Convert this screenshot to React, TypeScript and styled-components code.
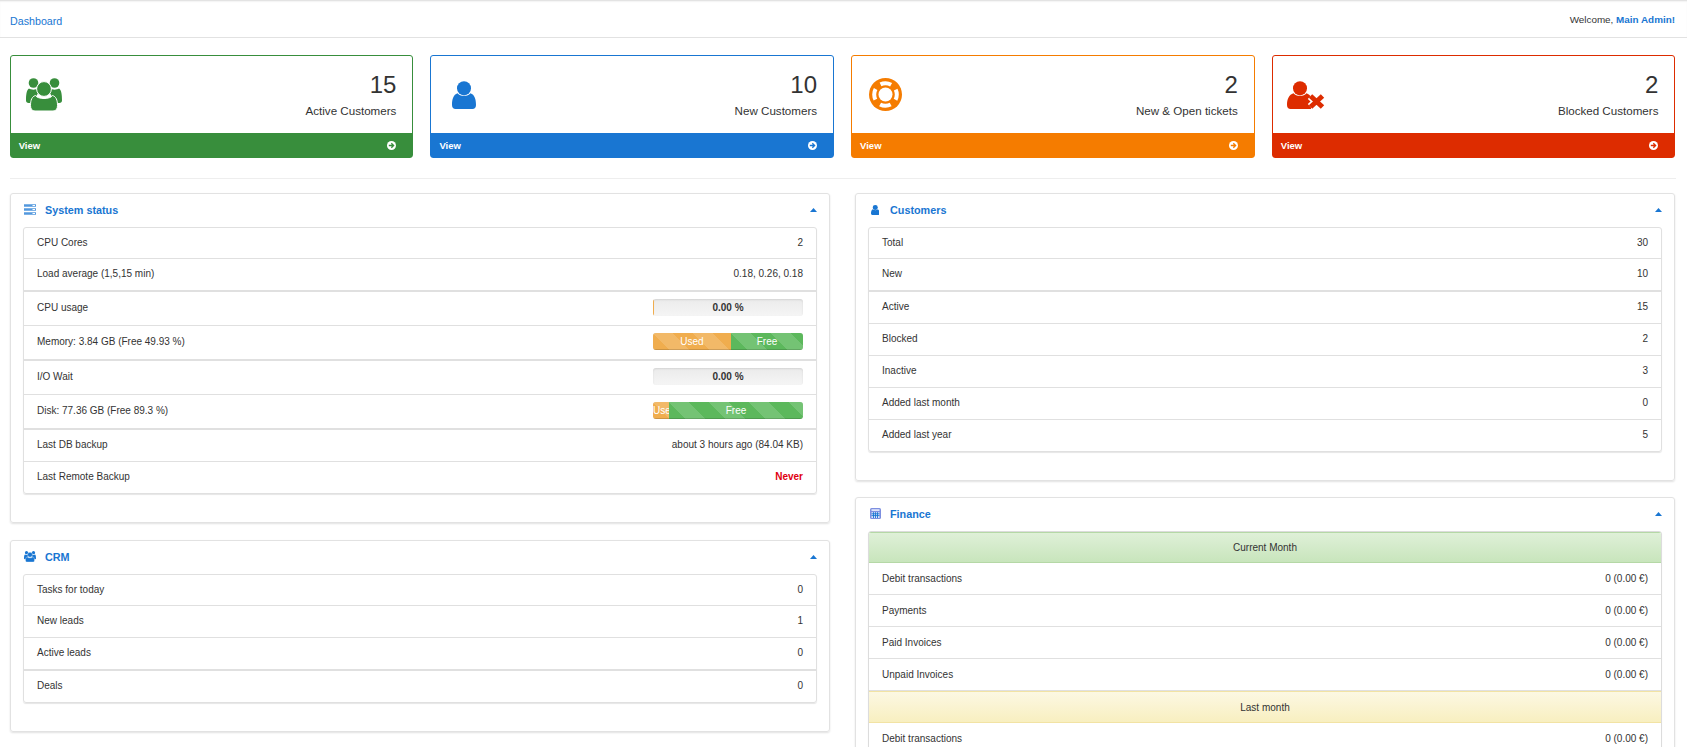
import React from "react"
import styled, { createGlobalStyle } from "styled-components"

const BLUE = "#1976d2"
const GREEN = "#388e3c"
const ORANGE = "#f57c00"
const RED = "#dd2c00"

const GlobalStyle = createGlobalStyle`
  html, body {
    margin: 0;
    padding: 0;
    height: 747px;
    overflow: hidden;
    background: #fff;
    color: #333;
    font-family: "Liberation Sans", Arial, sans-serif;
    font-size: 10px;
  }
`

const Page = styled.div`
  height: 747px;
  overflow: hidden;
`

const TopBar = styled.header`
  height: 38px;
  box-sizing: border-box;
  padding: 5px 12px 0 10px;
  display: flex;
  align-items: center;
  justify-content: space-between;
  border-bottom: 1px solid #e2e2e2;
  box-shadow: inset 0 2px 2px -1px rgba(0, 0, 0, 0.15);
`

const Crumb = styled.a`
  color: ${BLUE};
  font-size: 10.7px;
`

const Welcome = styled.div`
  font-size: 9.9px;
  margin-top: -3px;

  b {
    color: ${BLUE};
  }
`

const Cards = styled.section`
  display: grid;
  grid-template-columns: repeat(4, 403.7px);
  column-gap: 17px;
  margin: 17px 0 0 9.7px;
`

const Card = styled.div<{ $color: string }>`
  height: 103px;
  box-sizing: border-box;
  border: 1px solid ${(p) => p.$color};
  border-radius: 3px;
  display: flex;
  flex-direction: column;
  color: ${(p) => p.$color};
`

const CardBody = styled.div`
  flex: 1;
  display: flex;
  align-items: center;
  justify-content: space-between;
  padding: 0 16px 0 13px;
`

const CardIcon = styled.div`
  width: 40px;
  display: flex;
  justify-content: center;
`

const CardText = styled.div`
  text-align: right;
  color: #333;
`

const CardNumber = styled.div`
  font-size: 24px;
  line-height: 27px;
`

const CardLabel = styled.div`
  font-size: 11.6px;
  line-height: 14px;
  margin-top: 6px;
`

const CardFooter = styled.a<{ $color: string }>`
  height: 24px;
  background: ${(p) => p.$color};
  color: #fff;
  display: flex;
  align-items: center;
  justify-content: space-between;
  padding: 0 16px 0 8px;
  font-size: 9.5px;
  font-weight: bold;
`

const Divider = styled.hr`
  border: 0;
  border-top: 1px solid #eee;
  margin: 20px 11px 14px 10px;
`

const Columns = styled.div`
  display: grid;
  grid-template-columns: 820px 820px;
  column-gap: 25px;
  margin-left: 10px;
`

const Column = styled.div<{ $gap: number }>`
  display: flex;
  flex-direction: column;
  gap: ${(p) => p.$gap}px;
`

const Panel = styled.div`
  box-sizing: border-box;
  border: 1px solid #e2e2e2;
  border-radius: 3px;
  box-shadow: 0 1px 2px rgba(0, 0, 0, 0.12);
  padding: 0 12px 28px;
`

const PanelHead = styled.div`
  height: 33px;
  box-sizing: border-box;
  padding-bottom: 2px;
  display: flex;
  align-items: center;
  color: ${BLUE};
`

const PanelIcon = styled.span`
  width: 18px;
  display: flex;
  justify-content: center;
  margin: 0 6px 0 -2px;
`

const PanelTitle = styled.h3`
  flex: 1;
  margin: 0;
  font-size: 10.8px;
  font-weight: bold;
`

const List = styled.div`
  border: 1px solid #e0e0e0;
  border-radius: 3px;
  box-shadow: 0 1px 1px rgba(0, 0, 0, 0.1);
`

const Row = styled.div<{ $thick?: boolean; $tall?: boolean }>`
  box-sizing: border-box;
  height: ${(p) => (p.$tall ? 34 : 32) + (p.$thick ? 1 : 0)}px;
  padding: 0 13px ${(p) => (p.$tall ? 3 : 2)}px;
  display: flex;
  align-items: center;
  justify-content: space-between;
  font-size: 10px;
  border-bottom: ${(p) => (p.$thick ? 2 : 1)}px solid #e0e0e0;

  &:first-child {
    height: 31px;
    padding-bottom: 1px;
  }

  &:last-child {
    height: 31px;
    border-bottom: 0;
  }
`

const Never = styled.b`
  color: #e0000f;
`

const Band = styled.div<{ $tone: "green" | "yellow" }>`
  box-sizing: border-box;
  height: ${(p) => (p.$tone === "green" ? 31 : 32)}px;
  display: flex;
  align-items: center;
  justify-content: center;
  font-size: 10px;
  border: 1px solid ${(p) => (p.$tone === "green" ? "#b5d8a6" : "#f2e3a4")};
  border-width: 1px 0;
  background: ${(p) =>
    p.$tone === "green"
      ? "linear-gradient(#dff0d8, #c8e5bc)"
      : "linear-gradient(#fcf8e3, #f8efc0)"};
`

const FinanceList = styled(List)`
  overflow: hidden;
  border-color: #dcdcdc;
`

const FinanceRow = styled(Row)`
  padding-bottom: 0;

  &:last-child {
    height: 32px;
    border-bottom: 1px solid #e0e0e0;
  }
`

const Progress = styled.div`
  width: 150px;
  height: 17px;
  display: flex;
  overflow: hidden;
  position: relative;
  border-radius: 3px;
  background: linear-gradient(#ebebeb, #f5f5f5);
  box-shadow: inset 0 1px 2px rgba(0, 0, 0, 0.1);
`

const ProgressLabel = styled.span`
  position: absolute;
  inset: 0;
  display: flex;
  align-items: center;
  justify-content: center;
  font-weight: bold;
  font-size: 10px;
`

const Bar = styled.div<{ $color: string }>`
  flex: none;
  height: 100%;
  color: #fff;
  font-size: 10px;
  line-height: 17px;
  text-align: center;
  overflow: hidden;
  white-space: nowrap;
  background-color: ${(p) => p.$color};
  background-image: linear-gradient(
    45deg,
    rgba(255, 255, 255, 0.15) 25%,
    transparent 25%,
    transparent 50%,
    rgba(255, 255, 255, 0.15) 50%,
    rgba(255, 255, 255, 0.15) 75%,
    transparent 75%,
    transparent
  );
  background-size: 40px 40px;
  box-shadow: inset 0 -1px 0 rgba(0, 0, 0, 0.15);
`

const USED = "#f0ad4e"
const FREE = "#5cb85c"

const PersonIcon = ({ size = 28, color }: { size?: number; color: string }) => (
  <svg width={(size * 24) / 28} height={size} viewBox="0 0 24 28" fill={color}>
    <circle cx="12" cy="7.2" r="7" />
    <path d="M0 24C0 18 1.5 13.5 5.5 12.2 7.5 15.6 16.5 15.6 18.5 12.2 22.5 13.5 24 18 24 24 24 26.6 22.6 28 20.5 28H3.5C1.4 28 0 26.6 0 24Z" />
  </svg>
)

const UsersIcon = ({ size = 33, color }: { size?: number; color: string }) => (
  <svg width={(size * 36) / 33} height={size} viewBox="0 0 36 33" fill={color}>
    <circle cx="7.5" cy="5" r="4.8" />
    <circle cx="28.5" cy="5" r="4.8" />
    <path d="M3 10.5C5 12 10 12 11.5 10.5L14 12 6 25H2.5C1 25 0 24 0 22.5 0 17 .5 12 3 10.5Z" />
    <path d="M33 10.5C31 12 26 12 24.5 10.5L22 12 30 25H33.5C35 25 36 24 36 22.5 36 17 35.5 12 33 10.5Z" />
    <path
      d="M9.5 17.5C11.5 21.5 24.5 21.5 26.5 17.5 30 18.5 31.5 22 31.5 27.5 31.5 31 30 33 27 33H9C6 33 4.5 31 4.5 27.5 4.5 22 6 18.5 9.5 17.5Z"
      stroke="#fff"
      strokeWidth="1"
    />
    <circle cx="18" cy="11" r="7.4" stroke="#fff" strokeWidth="1" />
  </svg>
)

const RingIcon = ({ color }: { color: string }) => (
  <svg width="33" height="33" viewBox="0 0 33 33">
    <circle cx="16.5" cy="16.5" r="16.5" fill={color} />
    <circle cx="16.5" cy="16.5" r="7" fill="#fff" />
    <circle
      cx="16.5"
      cy="16.5"
      r="11.3"
      fill="none"
      stroke="#fff"
      strokeWidth="4"
      strokeDasharray="11 6.75"
      strokeDashoffset="5.5"
    />
  </svg>
)

const BlockedIcon = ({ color }: { color: string }) => (
  <svg width="38" height="28" viewBox="0 0 38 28" fill={color}>
    <circle cx="13" cy="7.2" r="7" />
    <path d="M0 24C0 18 2 13.5 6.5 12.2 8.5 15.6 17.5 15.6 19.5 12.2 21.5 13 23 14 24 16V28H3.5C1.4 28 0 26.6 0 24Z" />
    <path d="M23.5 15 35.5 26M35.5 15 23.5 26" stroke="#fff" strokeWidth="8" />
    <path d="M23.5 15 35.5 26M35.5 15 23.5 26" stroke={color} strokeWidth="5" />
  </svg>
)

const ArrowIcon = ({ color }: { color: string }) => (
  <svg width="9" height="9" viewBox="0 0 10 10">
    <circle cx="5" cy="5" r="5" fill="#fff" />
    <path d="M2 5H7M4.8 2.6 7.3 5 4.8 7.4" fill="none" stroke={color} strokeWidth="1.5" />
  </svg>
)

const ServerIcon = () => (
  <svg width="12" height="11" viewBox="0 0 12 11" fill="none">
    <path d="M0 1.5H12M0 5.5H12M0 9.5H12" stroke={BLUE} strokeWidth="2.4" opacity=".75" />
    <path d="M8.5 1.5H11M8.5 5.5H11M8.5 9.5H11" stroke="#fff" strokeWidth="1" />
  </svg>
)

const CalculatorIcon = () => (
  <svg width="11" height="11" viewBox="0 0 11 11">
    <rect width="11" height="11" rx="1.5" fill="#7d8fe0" />
    <rect x="1.5" y="1.2" width="8" height="1.8" fill="#dfe4fa" />
    <path d="M1.5 4.2H9.5V10H1.5Z" fill="#dfe4fa" />
    <path d="M1.5 5.8H9.5M1.5 7.6H9.5M3.5 4.2V10M5.5 4.2V10M7.5 4.2V10" stroke={BLUE} strokeWidth=".9" />
  </svg>
)

const Caret = () => (
  <svg width="7" height="4" viewBox="0 0 7 4" fill={BLUE}>
    <path d="M3.5 0 7 4H0Z" />
  </svg>
)

type PanelBoxProps = {
  icon: React.ReactNode
  title: string
  children: React.ReactNode
}

const PanelBox = ({ icon, title, children }: PanelBoxProps) => (
  <Panel>
    <PanelHead>
      <PanelIcon>{icon}</PanelIcon>
      <PanelTitle>{title}</PanelTitle>
      <Caret />
    </PanelHead>
    {children}
  </Panel>
)

const cards = [
  { color: GREEN, value: "15", label: "Active Customers", icon: <UsersIcon color={GREEN} /> },
  { color: BLUE, value: "10", label: "New Customers", icon: <PersonIcon color={BLUE} /> },
  { color: ORANGE, value: "2", label: "New & Open tickets", icon: <RingIcon color={ORANGE} /> },
  { color: RED, value: "2", label: "Blocked Customers", icon: <BlockedIcon color={RED} /> },
]

const customerRows = [
  ["Total", "30"],
  ["New", "10"],
  ["Active", "15"],
  ["Blocked", "2"],
  ["Inactive", "3"],
  ["Added last month", "0"],
  ["Added last year", "5"],
]

const crmRows = [
  ["Tasks for today", "0"],
  ["New leads", "1"],
  ["Active leads", "0"],
  ["Deals", "0"],
]

const financeRows = [
  ["Debit transactions", "0 (0.00 €)"],
  ["Payments", "0 (0.00 €)"],
  ["Paid Invoices", "0 (0.00 €)"],
  ["Unpaid Invoices", "0 (0.00 €)"],
]

const App = () => (
  <Page>
    <GlobalStyle />
    <TopBar>
      <Crumb>Dashboard</Crumb>
      <Welcome>
        Welcome, <b>Main Admin!</b>
      </Welcome>
    </TopBar>

    <Cards>
      {cards.map((c) => (
        <Card key={c.label} $color={c.color}>
          <CardBody>
            <CardIcon>{c.icon}</CardIcon>
            <CardText>
              <CardNumber>{c.value}</CardNumber>
              <CardLabel>{c.label}</CardLabel>
            </CardText>
          </CardBody>
          <CardFooter $color={c.color}>
            View
            <ArrowIcon color={c.color} />
          </CardFooter>
        </Card>
      ))}
    </Cards>

    <Divider />

    <Columns>
      <Column $gap={17}>
        <PanelBox icon={<ServerIcon />} title="System status">
          <List>
            <Row>
              CPU Cores <span>2</span>
            </Row>
            <Row $thick>
              Load average (1,5,15 min) <span>0.18, 0.26, 0.18</span>
            </Row>
            <Row $tall>
              CPU usage
              <Progress>
                <Bar $color={USED} style={{ width: "1px" }} />
                <ProgressLabel>0.00 %</ProgressLabel>
              </Progress>
            </Row>
            <Row $tall $thick>
              Memory: 3.84 GB (Free 49.93 %)
              <Progress>
                <Bar $color={USED} style={{ width: "52%" }}>Used</Bar>
                <Bar $color={FREE} style={{ width: "48%" }}>Free</Bar>
              </Progress>
            </Row>
            <Row $tall>
              I/O Wait
              <Progress>
                <ProgressLabel>0.00 %</ProgressLabel>
              </Progress>
            </Row>
            <Row $tall $thick>
              Disk: 77.36 GB (Free 89.3 %)
              <Progress>
                <Bar $color={USED} style={{ width: "10.7%" }}>Used</Bar>
                <Bar $color={FREE} style={{ width: "89.3%" }}>Free</Bar>
              </Progress>
            </Row>
            <Row>
              Last DB backup <span>about 3 hours ago (84.04 KB)</span>
            </Row>
            <Row>
              Last Remote Backup <Never>Never</Never>
            </Row>
          </List>
        </PanelBox>

        <PanelBox icon={<UsersIcon size={11} color={BLUE} />} title="CRM">
          <List>
            {crmRows.map(([name, value], i) => (
              <Row key={name} $thick={i === 2}>
                {name} <span>{value}</span>
              </Row>
            ))}
          </List>
        </PanelBox>
      </Column>

      <Column $gap={16}>
        <PanelBox icon={<PersonIcon size={10} color={BLUE} />} title="Customers">
          <List>
            {customerRows.map(([name, value], i) => (
              <Row key={name} $thick={i === 1}>
                {name} <span>{value}</span>
              </Row>
            ))}
          </List>
        </PanelBox>

        <PanelBox icon={<CalculatorIcon />} title="Finance">
          <FinanceList>
            <Band $tone="green">Current Month</Band>
            {financeRows.map(([name, value]) => (
              <FinanceRow key={name}>
                {name} <span>{value}</span>
              </FinanceRow>
            ))}
            <Band $tone="yellow">Last month</Band>
            {financeRows.map(([name, value]) => (
              <FinanceRow key={name}>
                {name} <span>{value}</span>
              </FinanceRow>
            ))}
          </FinanceList>
        </PanelBox>
      </Column>
    </Columns>
  </Page>
)

export default App
